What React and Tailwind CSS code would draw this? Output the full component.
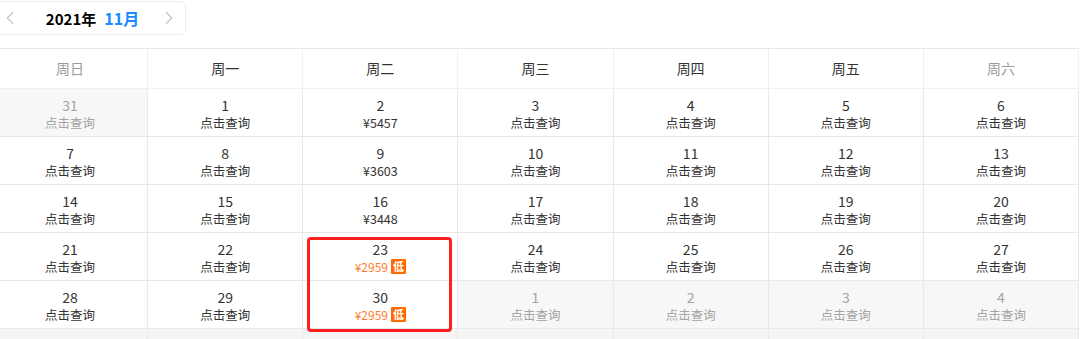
import { ChevronLeft, ChevronRight } from "lucide-react";

const semana = ["周日", "周一", "周二", "周三", "周四", "周五", "周六"];

// preços conhecidos do mês
const precos = { 2: "¥5457", 9: "¥3603", 16: "¥3448", 23: "¥2959", 30: "¥2959" };
const baixos = [23, 30];

function montarDias() {
  const dias = [{ dia: 31, fora: true }];
  for (let d = 1; d <= 30; d++) dias.push({ dia: d, fora: false });
  for (let d = 1; d <= 4; d++) dias.push({ dia: d, fora: true });
  return dias;
}

function Celula({ item }) {
  const preco = !item.fora && precos[item.dia];
  const baixo = !item.fora && baixos.includes(item.dia);

  return (
    <div
      className={`h-[48px] pt-[2px] border-r border-b border-[#e9e9e9] flex flex-col items-center justify-center ${
        item.fora ? "bg-[#f7f7f7] text-[#a3a3a3]" : "bg-white text-[#333]"
      }`}
    >
      <span className="text-[14px] leading-[17px]">{item.dia}</span>
      {baixo ? (
        <span className="flex items-center gap-[3px] text-[12px] leading-[17px] text-[#ff7a2e]">
          {preco}
          <span className="w-[15px] h-[15px] bg-[#ff6a00] text-white text-[11px] leading-[15px] text-center rounded-[1px] font-bold">
            低
          </span>
        </span>
      ) : (
        <span className="text-[12.5px] leading-[17px]">{preco || "点击查询"}</span>
      )}
    </div>
  );
}

export default function App() {
  const dias = montarDias();

  return (
    <div className="relative w-[1080px] h-[339px] overflow-hidden bg-white font-['Noto_Sans_CJK_SC','Open_Sans',sans-serif]">

      {/* HEADER */}
      <div className="mt-px ml-[-6px] w-[192px] h-[34px] border border-[#ececec] rounded-[5px] flex items-center justify-between pl-[4px] pr-[5px]">
        <ChevronLeft size={22} strokeWidth={1.5} className="text-[#c8c8c8]" />
        <div className="flex items-baseline gap-[8px] ml-[6px]">
          <span className="text-[15px] font-bold text-black">2021年</span>
          <span className="text-[16px] font-bold text-[#1a8cff]">11月</span>
        </div>
        <ChevronRight size={22} strokeWidth={1.5} className="text-[#c8c8c8]" />
      </div>

      {/* TABELA */}
      <div className="mt-[13px] ml-[-7px] w-[1086px] border-t border-[#e9e9e9] grid grid-cols-7">
        {semana.map((s, i) => (
          <div
            key={s}
            className={`h-[40px] border-r border-b border-[#f0f0f0] flex items-center justify-center text-[14px] ${
              i === 0 || i === 6 ? "text-[#9a9a9a]" : "text-[#333]"
            }`}
          >
            {s}
          </div>
        ))}

        {dias.map((d, idx) => (
          <Celula key={idx} item={d} />
        ))}

        {semana.map((s) => (
          <div key={"f" + s} className="h-[48px] border-r border-[#e9e9e9] bg-[#f5f5f5]" />
        ))}
      </div>

      {/* DESTAQUE */}
      <div className="absolute left-[307px] top-[237px] w-[145px] h-[95px] border-[3px] border-[#ff1f1f] rounded-[4px]" />
    </div>
  );
}
